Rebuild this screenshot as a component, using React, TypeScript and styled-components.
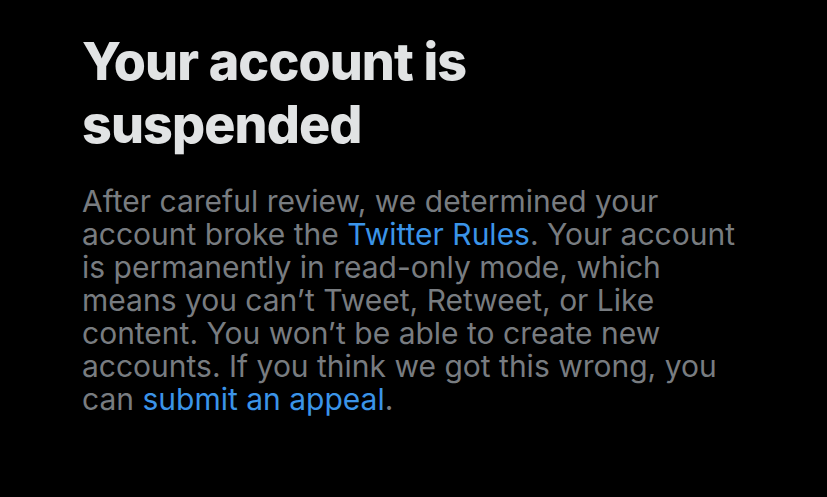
import React from "react";
import styled, { createGlobalStyle } from "styled-components";

const GlobalStyle = createGlobalStyle`
    html, body {
        margin: 0;
        padding: 0;
        background-color: #000;
    }
    body {
        font-family: Inter, "Noto Sans", "Liberation Sans", sans-serif;
        -webkit-font-smoothing: antialiased;
    }
`;

const Page = styled.div`
    width: 827px;
    height: 497px;
    background-color: #000;
    box-sizing: border-box;
    padding: 30px 82px 0 82px;
    display: flex;
    flex-direction: column;
    gap: 29px;
    overflow: hidden;
`;

const Title = styled.h1`
    margin: 0;
    color: #e1e3e4;
    font-size: 52px;
    font-weight: 800;
    line-height: 63px;
    letter-spacing: -0.9px;
`;

const Body = styled.p`
    margin: 0;
    color: #787c80;
    font-size: 30px;
    font-weight: 400;
    line-height: 33px;
    letter-spacing: 0;
`;

const Link = styled.a`
    color: #3b94e8;
    text-decoration: none;
    cursor: pointer;
`;

const App = () => {
    return (
        <>
            <GlobalStyle />
            <Page>
                <Title>Your account is suspended</Title>
                <Body>
                    After careful review, we determined your account broke the{" "}
                    <Link>Twitter Rules</Link>. Your account is permanently in
                    read-only mode, which means you can’t Tweet, Retweet, or Like
                    content. You won’t be able to create new accounts. If you think
                    we got this wrong, you can <Link>submit an appeal</Link>.
                </Body>
            </Page>
        </>
    );
};

export default App;
